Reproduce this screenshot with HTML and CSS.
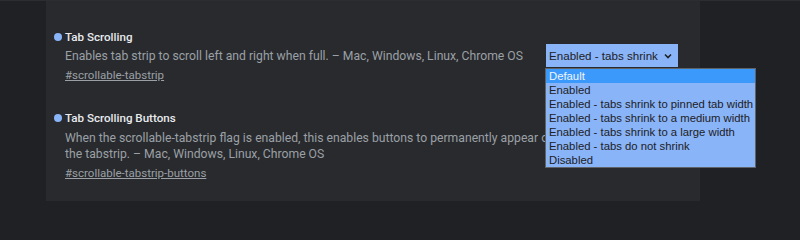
FILE: index.html
```html
<!DOCTYPE html>
<html>
<head>
<meta charset="utf-8">
<link rel="stylesheet" href="styles.css">
</head>
<body>
<div class="page">
  <div class="side"></div>
  <main class="panel">
    <section class="exp first">
      <div class="exp-text">
        <h3 class="title"><span class="dot"></span>Tab Scrolling</h3>
        <p class="desc">Enables tab strip to scroll left and right when full. – Mac, Windows, Linux, Chrome OS</p>
        <a class="link" href="#">#scrollable-tabstrip</a>
      </div>
      <div class="control">
        <div class="select">Enabled - tabs shrink<svg class="chev" width="8" height="6" viewBox="0 0 8 6"><path d="M1 1.5 L4 4.5 L7 1.5" fill="none" stroke="#202124" stroke-width="1.6"/></svg></div>
        <ul class="menu">
          <li class="sel">Default</li>
          <li>Enabled</li>
          <li>Enabled - tabs shrink to pinned tab width</li>
          <li>Enabled - tabs shrink to a medium width</li>
          <li>Enabled - tabs shrink to a large width</li>
          <li>Enabled - tabs do not shrink</li>
          <li>Disabled</li>
        </ul>
      </div>
    </section>
    <section class="exp second">
      <div class="exp-text">
        <h3 class="title"><span class="dot"></span>Tab Scrolling Buttons</h3>
        <p class="desc">When the scrollable-tabstrip flag is enabled, this enables buttons to permanently appear on the tabstrip. – Mac, Windows, Linux, Chrome OS</p>
        <a class="link" href="#">#scrollable-tabstrip-buttons</a>
      </div>
    </section>
  </main>
  <div class="side right"></div>
</div>
</body>
</html>
```
FILE: styles.css
```css
html, body {
  margin: 0;
  padding: 0;
  background: #202124;
  height: 201px;
  overflow: hidden;
}
.page {
  display: flex;
  height: 201px;
  border-top: 1px solid #2c2d30;
  box-sizing: border-box;
}
.side {
  width: 46px;
  flex: none;
  background: #202124;
}
.side.right {
  width: 100px;
}
.panel {
  width: 654px;
  flex: none;
  background: #292a2d;
  box-sizing: border-box;
  padding: 26px 22px 0 8px;
  font-family: Roboto, "Liberation Sans", sans-serif;
}
.exp {
  display: flex;
  justify-content: space-between;
}
.second {
  margin-top: 25px;
}
.first .exp-text {
  flex: 1;
  min-width: 0;
}
.second .exp-text {
  width: 508px;
}
.title {
  margin: 0;
  font-size: 11.6px;
  line-height: 20px;
  font-weight: 500;
  color: #e8eaed;
  display: flex;
  align-items: center;
}
.dot {
  width: 8px;
  height: 8px;
  border-radius: 50%;
  background: #8ab4f8;
  margin-right: 3px;
  flex: none;
}
.desc {
  margin: 1px 0 0 11px;
  font-size: 12.2px;
  line-height: 16px;
  color: #9aa0a6;
}
.second .desc { margin-top: 2px; }
.link {
  display: inline-block;
  margin: 2px 0 0 11px;
  font-size: 11.5px;
  line-height: 16px;
  color: #9aa0a6;
  text-decoration: underline;
}
.control {
  position: relative;
  flex: none;
  padding-top: 17px;
}
.select {
  width: 132px;
  height: 23px;
  box-sizing: border-box;
  background: #8ab4f8;
  color: #202124;
  font-family: "Liberation Sans", Arial, sans-serif;
  font-size: 11.6px;
  line-height: 23px;
  padding-left: 3px;
  display: flex;
  align-items: center;
  justify-content: space-between;
  padding-right: 6px;
  white-space: nowrap;
}
.chev { display: block; flex: none; }
.menu {
  position: absolute;
  left: -1px;
  top: 41px;
  margin: 0;
  padding: 0;
  list-style: none;
  width: 211px;
  box-sizing: border-box;
  background: #8ab4f8;
  border: 1px solid #5f6368;
  font-family: "Liberation Sans", Arial, sans-serif;
  font-size: 11.3px;
  line-height: 14px;
  color: #202124;
  z-index: 2;
}
.menu li {
  padding-left: 3px;
  white-space: nowrap;
}
.menu li.sel {
  background: #3b99fc;
  color: #f1f5fb;
}
```
